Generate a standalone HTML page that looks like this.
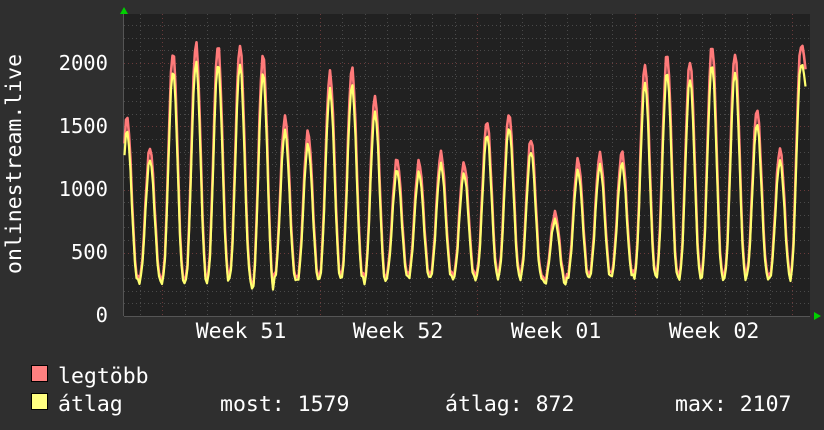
<!DOCTYPE html>
<html><head><meta charset="utf-8"><style>
html,body{margin:0;padding:0;background:#2f2f2f;}
svg{display:block}
text{font-family:"DejaVu Sans Mono","Liberation Mono",monospace;fill:#fff;}
</style></head><body>
<svg id="g" width="824" height="430" xmlns="http://www.w3.org/2000/svg">
<rect width="824" height="430" fill="#2f2f2f"/>
<rect x="124" y="14" width="686" height="302" fill="#212121"/>
<g id="grid"></g>
<polyline id="red" fill="none" stroke="#ff7a7a" stroke-width="2.6" stroke-linejoin="round"/>
<polyline id="yel" fill="none" stroke="#ffff70" stroke-width="2.2" stroke-linejoin="round"/>
<polygon points="120,14 128,14 124,7" fill="#00d000"/>
<polygon points="814,312 814,320 821,316" fill="#00d000"/>
<g font-size="20.5" text-anchor="end">
<text x="108" y="322">0</text>
<text x="108" y="259">500</text>
<text x="108" y="196">1000</text>
<text x="108" y="133">1500</text>
<text x="108" y="70">2000</text>
</g>
<g font-size="21.5" text-anchor="middle">
<text x="241" y="338">Week 51</text>
<text x="398" y="338">Week 52</text>
<text x="556" y="338">Week 01</text>
<text x="714" y="338">Week 02</text>
</g>
<text font-size="21.5" transform="translate(21,274) rotate(-90)">onlinestream.live</text>
<rect x="31.5" y="365.5" width="16" height="16" fill="#ff8080" stroke="#000"/>
<rect x="31.5" y="393.5" width="16" height="16" fill="#ffff80" stroke="#000"/>
<g font-size="21.5">
<text x="58" y="383">legtöbb</text>
<text x="58" y="411">átlag</text>
<text x="220" y="411">most: 1579</text>
<text x="445" y="411">átlag: 872</text>
<text x="675" y="411">max: 2107</text>
</g>
</svg>
<script>
var NS="http://www.w3.org/2000/svg",grid=document.getElementById("grid");
function ln(x1,y1,x2,y2,c,d){var l=document.createElementNS(NS,"line");l.setAttribute("x1",x1);l.setAttribute("y1",y1);l.setAttribute("x2",x2);l.setAttribute("y2",y2);l.setAttribute("stroke",c);l.setAttribute("stroke-width","1");if(d)l.setAttribute("stroke-dasharray",d);grid.appendChild(l);}
var s=0.1265;
for(var v=100;v<=2300;v+=100){var y=Math.round(316-v*s)+0.5;ln(124,y,810,y,v%500==0?"#6a3a3a":"#4a4a4a","1,3");}
for(var k=-9;k<30;k++){var x=319.6+22.5*k;if(x<126||x>809)continue;var maj=((k%7)+7)%7==0;ln(Math.round(x)+0.5,14,Math.round(x)+0.5,316,maj?"#6a3a3a":"#4a4a4a","1,3");}
ln(124,316.5,810,316.5,"#555");ln(123.5,14,123.5,316,"#555");
var px=[127,150,173,196,218,240,263,285,308,330,352,375,397,419,441,464,487,509,531,555,578,600,622,645,667,690,712,735,757,780,801];
var pk=[1573,1330,2087,2158,2142,2142,2063,1573,1455,1923,1960,1734,1241,1218,1288,1209,1542,1603,1400,813,1233,1280,1297,1984,2071,2018,2142,2079,1636,1320,2142];
var tr=[300,290,290,280,300,310,220,310,300,310,320,280,330,320,330,320,330,330,320,270,320,330,340,330,330,320,320,320,330,310,300];
function val(x,f){var i=0;for(var j=0;j<px.length;j++){if(Math.abs(x-px[j])<Math.abs(x-px[i]))i=j;}
var d=x-px[i];if(i==px.length-1&&d>0){d=d*0.45;}var ph=d/11.25;if(ph>1)ph=1;if(ph<-1)ph=-1;var c=(1+Math.cos(Math.PI*ph))/2;c=Math.pow(c,1.3);
var p=pk[i]*f,t=tr[i]*(f<1?0.92:1);return t+(p-t)*c;}
var r=[],yy=[];
for(var x=124.5;x<=806;x+=1.5){var n=Math.sin(x*1.7)*20;r.push(x+","+(316-(val(x,1)+n)*s).toFixed(1));yy.push(x+","+(316-(val(x,0.93)+n*0.8)*s).toFixed(1));}
document.getElementById("red").setAttribute("points",r.join(" "));
document.getElementById("yel").setAttribute("points",yy.join(" "));
</script>
</body></html>
